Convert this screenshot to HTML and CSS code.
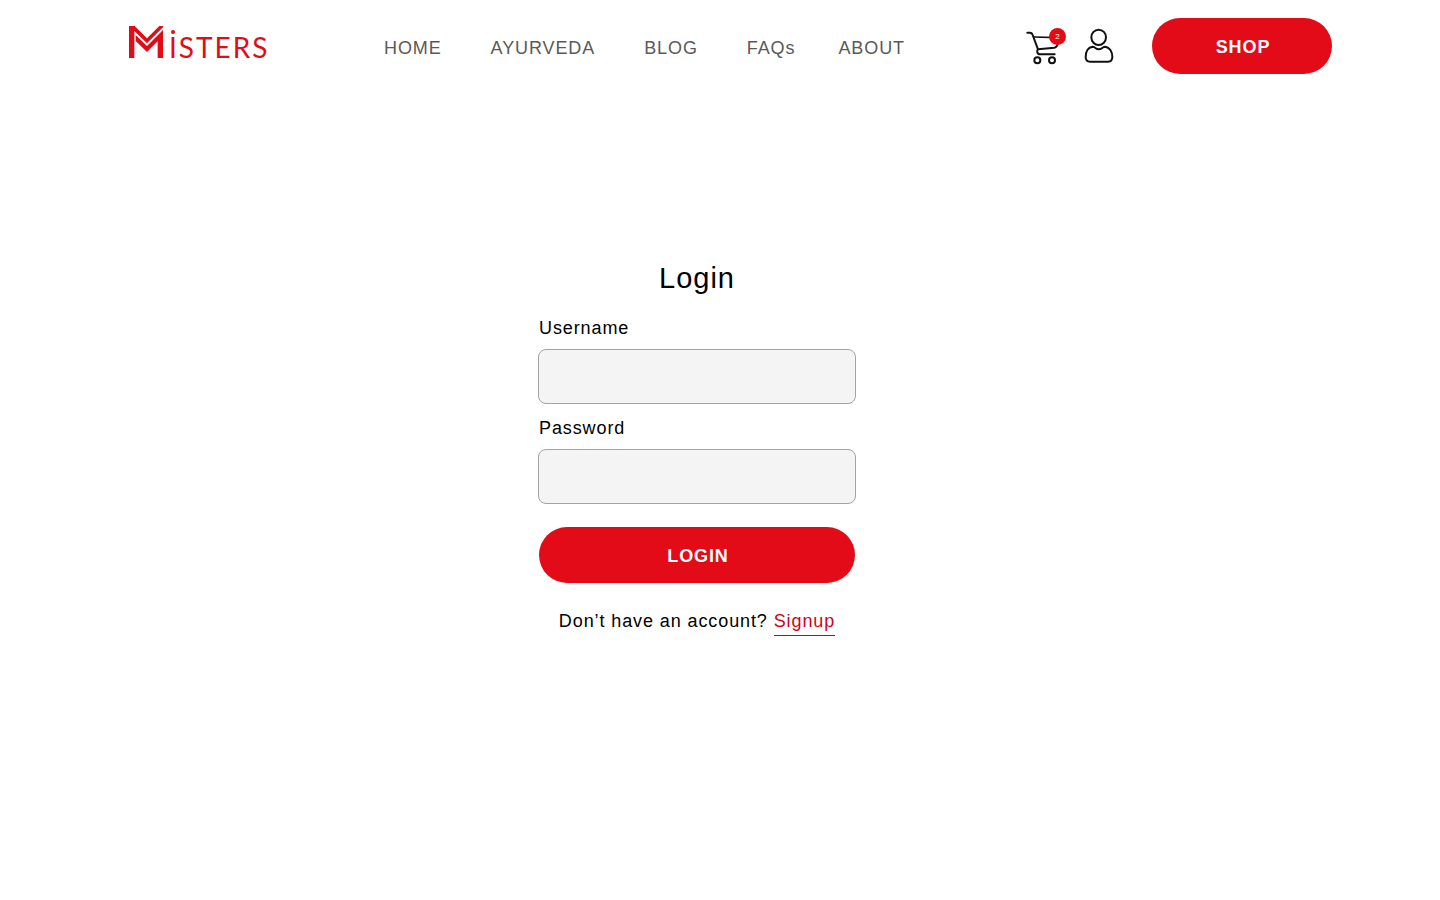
FILE: index.html
```html
<!DOCTYPE html>
<html lang="en">
<head>
<meta charset="utf-8">
<meta name="viewport" content="width=device-width, initial-scale=1">
<title>Misters – Login</title>
<link rel="stylesheet" href="styles.css">
</head>
<body>
<header class="header">
  <a class="logo" href="#" aria-label="Misters">
    <svg class="logo-mark" viewBox="0 0 102 96" aria-hidden="true">
      <path d="M0 0H17L54 37L91 0H102V4L54 52L16 15V96H0Z"/>
      <path d="M20 27L54 60L102 12V96H86V46L54 78L20 45Z"/>
    </svg>
    <span class="logo-text">ISTERS</span>
  </a>
  <nav class="nav">
    <a href="#">HOME</a>
    <a href="#">AYURVEDA</a>
    <a href="#">BLOG</a>
    <a href="#">FAQs</a>
    <a class="nav-last" href="#">ABOUT</a>
  </nav>
  <div class="actions">
    <a class="cart" href="#" aria-label="Cart">
      <svg class="cart-icon" viewBox="33 36 123 114" aria-hidden="true">
        <path d="M37 53H45Q51 53 53 60L69 103L118 98Q128 96 128 84"/>
        <path class="thin" d="M58 66L125 68"/>
        <path d="M69 103Q65 107 67 112Q69 118 76 118H119"/>
        <circle cx="67" cy="136" r="9"/>
        <circle cx="111" cy="136" r="9"/>
      </svg>
      <span class="badge">2</span>
    </a>
    <a class="account" href="#" aria-label="Account">
      <svg class="account-icon" viewBox="207 39 90 108" aria-hidden="true">
        <ellipse cx="251" cy="67" rx="22" ry="23"/>
        <path d="M233 95C218 97 212 112 212 126Q212 140 225 140H279Q292 140 292 126C292 112 285 97 270 95Q265 95 262 99Q251 107 241 99Q238 95 233 95Z"/>
      </svg>
    </a>
    <button class="button shop" type="button">SHOP</button>
  </div>
</header>
<main class="main">
  <form class="form">
    <h1 class="title">Login</h1>
    <label class="label" for="username">Username</label>
    <input class="input" id="username" type="text">
    <label class="label" for="password">Password</label>
    <input class="input" id="password" type="password">
    <button class="button submit" type="button">LOGIN</button>
    <p class="note">Don’t have an account? <a class="signup" href="#">Signup</a></p>
  </form>
</main>
</body>
</html>
```

FILE: styles.css
```css
* { box-sizing: border-box; }

body {
  margin: 0;
  background: #fff;
  color: #000;
  font-family: "Liberation Sans", Arial, sans-serif;
  font-size: 18px;
  line-height: 20px;
  letter-spacing: 0.05em;
}

a { color: inherit; text-decoration: none; }

.header {
  display: flex;
  align-items: center;
  padding: 18px 108px 0 129px;
}

.logo {
  display: flex;
  align-items: flex-end;
  gap: 6px;
  width: 255px;
  height: 32px;
  margin-bottom: 8px;
  color: #e30b17;
}

.logo-mark { width: 34px; height: 32px; fill: #e30b17; }

.logo-text {
  position: relative;
  font-family: Lato, sans-serif;
  font-size: 28px;
  line-height: 20px;
  letter-spacing: 2px;
  margin-bottom: 1px;
}

.logo-text::before {
  content: "";
  position: absolute;
  top: -7px;
  left: 2px;
  width: 4px;
  height: 4px;
  border-radius: 50%;
  background: #e30b17;
}

.nav { display: flex; gap: 49px; padding-top: 4px; color: #5a5a5a; }
.nav-last { margin-left: -6px; }

.actions { display: flex; align-items: center; margin-left: auto; }

.cart { position: relative; display: flex; margin-right: 17px; }
.cart-icon { width: 41px; height: 38px; }
.account { display: flex; margin-right: 38px; }
.account-icon { width: 30px; height: 36px; }

.cart-icon, .account-icon {
  fill: none;
  stroke: #111;
  stroke-width: 6;
  stroke-linecap: round;
  stroke-linejoin: round;
}

.cart-icon .thin { stroke-width: 5; }

.badge {
  position: absolute;
  top: 1px;
  right: 1px;
  width: 17px;
  height: 17px;
  border-radius: 50%;
  background: #e30b17;
  color: #fff;
  font-size: 8px;
  line-height: 18px;
  letter-spacing: 0;
  text-align: center;
}

.button {
  height: 56px;
  padding: 2px 0 0 2px;
  border: 0;
  border-radius: 28px;
  background: #e30b17;
  color: #fff;
  font: bold 18px/20px "Liberation Sans", Arial, sans-serif;
  letter-spacing: 0.05em;
  cursor: pointer;
}

.shop { width: 180px; }

.main {
  display: flex;
  justify-content: center;
  padding: 188px 46px 48px 0;
}

.form { display: flex; flex-direction: column; width: 318px; }

.title {
  margin: 0 0 24px;
  font-size: 29px;
  line-height: 32px;
  font-weight: normal;
  letter-spacing: 1px;
  text-align: center;
}

.label { margin: 0 1px 11px; }

.input {
  height: 55px;
  margin-bottom: 14px;
  padding: 0 16px;
  border: 1px solid #a3a3a3;
  border-radius: 8px;
  background: #f4f4f4;
  font: inherit;
}

.submit { margin: 9px 1px 28px; }

.note { margin: 0; text-align: center; }

.signup {
  display: inline-block;
  padding-bottom: 4px;
  border-bottom: 1px solid #d0021b;
  color: #d0021b;
}
```
